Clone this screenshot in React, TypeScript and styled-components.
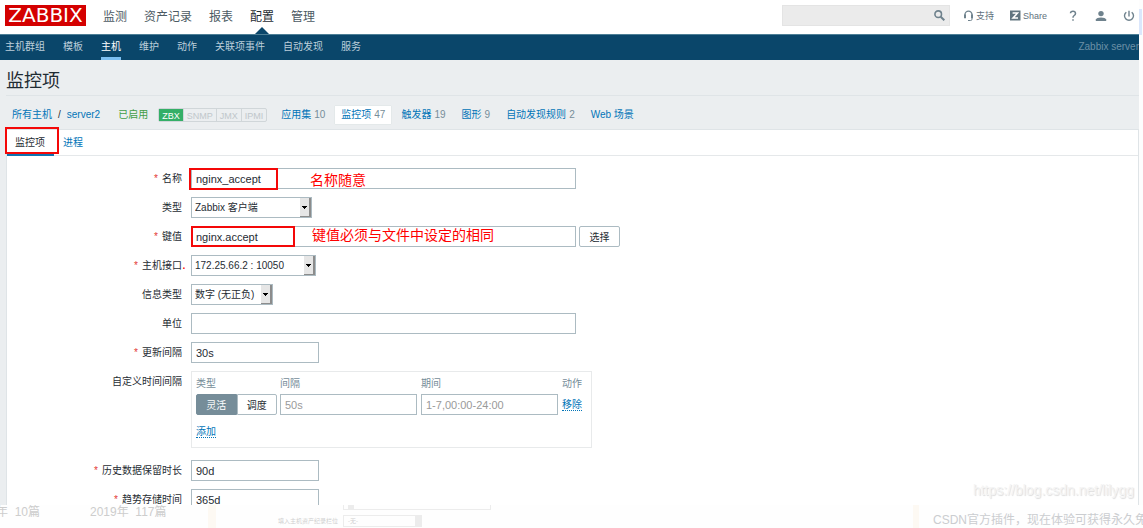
import React from 'react';
import styled, { createGlobalStyle, css } from 'styled-components';

const Global = createGlobalStyle`
  *, *::before, *::after { box-sizing: border-box; }
  body {
    margin: 0;
    background: #fff;
    color: #1f2c33;
    font-family: "Liberation Sans", "Noto Sans CJK SC", sans-serif;
    font-size: 10px;
    line-height: 14px;
    overflow: hidden;
  }
  button, input, select { font-family: inherit; margin: 0; }
  a { color: #0275b8; text-decoration: none; white-space: nowrap; }
`;

const Page = styled.div`
  display: grid;
  grid-template-columns: minmax(0, 1fr) 4px;
  grid-template-rows: minmax(0, 1fr) 23px;
  height: 100vh;
`;

const Screen = styled.div`
  position: relative;
  display: flex;
  flex-direction: column;
  min-height: 0;
  overflow: hidden;
  background: #ebeef0;
`;

const Gutter = styled.div`
  padding-top: 9px;
  background: #fdfdfd;
  &::before {
    content: '';
    display: block;
    height: 26px;
    margin-right: 1px;
    background: #dbe7fc;
  }
`;

const Header = styled.header`
  display: flex;
  flex: none;
  align-items: center;
  height: 34px;
  padding: 0 4px 3px 5px;
  background: #fff;
`;

const Logo = styled.a`
  width: 81px;
  height: 21px;
  margin-right: 17px;
  background: #d40000;
  color: #fff;
  font-family: "DejaVu Sans", sans-serif;
  font-size: 20px;
  line-height: 21px;
  text-align: center;
`;

const MainNav = styled.nav`
  display: flex;
  gap: 17px;
  align-self: stretch;
`;

const MainLink = styled.a<{ $active?: boolean }>`
  position: relative;
  padding-top: 8px;
  color: ${p => (p.$active ? '#1f2c33' : '#4c5a63')};
  font-size: 12px;
  line-height: 18px;
  ${p => p.$active && css`
    &::after {
      content: '';
      position: absolute;
      bottom: -3px;
      left: 5px;
      border: 7px solid transparent;
      border-top: 0;
      border-bottom-color: #0a466a;
    }
  `}
`;

const Tools = styled.div`
  display: flex;
  align-items: center;
  margin-left: auto;
`;

const Search = styled.label`
  display: flex;
  align-items: center;
  width: 168px;
  height: 21px;
  margin-right: 13px;
  padding-right: 4px;
  border: 1px solid #e4e4e4;
  background: #ebebeb;
  input {
    flex: 1;
    min-width: 0;
    border: 0;
    background: transparent;
    outline: 0;
  }
`;

const Tool = styled.a<{ $after?: number }>`
  display: flex;
  align-items: center;
  gap: 2px;
  margin-right: ${p => p.$after ?? 0}px;
  color: #5f717c;
  font-size: 9px;
`;

const SubNav = styled.nav`
  display: flex;
  flex: none;
  gap: 18px;
  height: 26px;
  padding-left: 5px;
  border-top: 1px solid #4d7f96;
  background: #0a466a;
`;

const SubLink = styled.a<{ $active?: boolean }>`
  padding-top: 5px;
  border-bottom: 3px solid ${p => (p.$active ? '#7cc0f2' : 'transparent')};
  color: ${p => (p.$active ? '#fff' : '#bccfdb')};
`;

const ServerName = styled.span`
  margin-left: auto;
  padding-top: 5px;
  color: #6c90a6;
`;

const Title = styled.h1`
  flex: none;
  margin: 0 0 0 6px;
  height: 36px;
  border-bottom: 1px solid #dfe4e7;
  font-size: 18px;
  font-weight: 400;
  line-height: 42px;
`;

const Crumbs = styled.nav`
  display: flex;
  flex: none;
  align-items: center;
  height: 33px;
  margin-left: 12px;
  padding-top: 4px;
`;

const Path = styled.div`
  display: flex;
  gap: 6px;
  margin-right: 18px;
`;

const Enabled = styled.span`
  margin-right: 10px;
  color: #429e47;
  white-space: nowrap;
`;

const Tags = styled.div`
  display: flex;
  height: 14px;
  margin-right: 8px;
  border: 1px solid #d0d6d9;
  border-radius: 2px;
`;

const Tag = styled.span<{ $on?: boolean }>`
  padding: 1px 3px 0;
  background: ${p => (p.$on ? '#34af67' : 'transparent')};
  color: ${p => (p.$on ? '#fff' : '#c0c7cb')};
  font-size: 9px;
  line-height: 12px;
  & + & { border-left: 1px solid #d0d6d9; }
`;

const CrumbLink = styled.a<{ $active?: boolean }>`
  display: flex;
  gap: 3px;
  margin-right: 4px;
  padding: 2px 6px;
  background: ${p => (p.$active ? '#fff' : 'transparent')};
  box-shadow: ${p => (p.$active ? '0 0 1px #c5ccd0' : 'none')};
  span { color: #768d99; }
`;

const Panel = styled.main`
  flex: 1;
  min-height: 0;
  margin-left: 6px;
  border: solid #dfe4e7;
  border-width: 1px 1px 0;
  background: #fff;
`;

const Tabs = styled.div`
  display: flex;
  gap: 1px;
  height: 26px;
  border-bottom: 1px solid #e5e8ea;
`;

const TabItem = styled.div`
  position: relative;
`;

const Tab = styled.a<{ $active?: boolean }>`
  display: block;
  height: 26px;
  padding: 6px 8px 0;
  border-bottom: 3px solid ${p => (p.$active ? '#0f73b0' : 'transparent')};
  color: ${p => (p.$active ? '#1f2c33' : '#0275b8')};
  ${p => p.$active && css`padding-right: 9px;`}
`;

const Mark = styled.span<{ $x: number; $y: number; $w: number; $h: number }>`
  position: absolute;
  left: ${p => p.$x}px;
  top: ${p => p.$y}px;
  width: ${p => p.$w}px;
  height: ${p => p.$h}px;
  border: 2px solid #f40808;
  pointer-events: none;
`;

const Note = styled.span<{ $x: number; $y: number }>`
  position: absolute;
  left: ${p => p.$x}px;
  top: ${p => p.$y}px;
  color: #f00;
  font-size: 14px;
  line-height: 20px;
  white-space: nowrap;
`;

const Form = styled.form`
  display: flex;
  flex-direction: column;
  gap: 8px;
  padding-top: 12px;
`;

const Row = styled.div<{ $last?: boolean }>`
  display: grid;
  grid-template-columns: 175px minmax(0, 1fr);
  column-gap: 9px;
  margin-bottom: ${p => (p.$last ? 4 : 0)}px;
`;

const Label = styled.label<{ $required?: boolean }>`
  padding-top: 4px;
  text-align: right;
  white-space: nowrap;
  ${p => p.$required && css`
    &::before { content: '*'; margin-right: 4px; color: #e33734; }
  `}
`;

const Field = styled.div`
  position: relative;
  display: flex;
  gap: 3px;
`;

const Input = styled.input<{ $w: number }>`
  width: ${p => p.$w}px;
  height: 21px;
  padding: 0 4px;
  border: 1px solid #acbbc2;
  border-radius: 0;
  background: #fff;
  color: #1f2c33;
  font-size: 11px;
  &::placeholder { color: #9a9a9a; opacity: 1; }
`;

const SelectBox = styled.div<{ $w: number }>`
  position: relative;
  width: ${p => p.$w}px;
  height: 21px;
  select {
    width: 100%;
    height: 21px;
    padding: 0 14px 0 3px;
    border: 1px solid #acbbc2;
    border-radius: 0;
    background: #fff;
    color: #1f2c33;
    font-size: 10px;
    appearance: none;
  }
  svg {
    position: absolute;
    top: 1px;
    right: 1px;
    pointer-events: none;
  }
`;

const Button = styled.button`
  width: 41px;
  height: 21px;
  padding: 0;
  border: 1px solid #acbbc2;
  border-radius: 2px;
  background: #fff;
  color: #1f2c33;
  font-size: 10px;
`;

const Toggle = styled.div`
  display: flex;
  width: 81px;
`;

const ToggleButton = styled(Button)<{ $on?: boolean }>`
  flex: 1;
  border-radius: ${p => (p.$on ? '2px 0 0 2px' : '0 2px 2px 0')};
  border-color: ${p => (p.$on ? '#768d99' : '#acbbc2')};
  background: ${p => (p.$on ? '#768d99' : '#fff')};
  color: ${p => (p.$on ? '#fff' : '#1f2c33')};
`;

const Intervals = styled.div`
  width: 401px;
  height: 77px;
  padding: 5px 4px;
  border: 1px solid #e8eaeb;
`;

const IntervalTable = styled.table`
  border-collapse: collapse;
  table-layout: fixed;
  width: 387px;
  th, td { padding: 0; text-align: left; vertical-align: middle; }
  th { height: 17px; color: #768d99; font-weight: 400; vertical-align: top; }
  td { height: 21px; }
  input { display: block; }
`;

const ActionLink = styled.a`
  border-bottom: 1px dotted #0275b8;
  line-height: 12px;
`;

const AddRow = styled.div`
  padding-top: 10px;
`;

const Watermark = styled.div`
  position: absolute;
  right: 5px;
  bottom: 5px;
  color: #f4f4f4;
  font-size: 14px;
  line-height: 20px;
  text-shadow: 1px 1px 1px #dcdcdc;
`;

const Footer = styled.footer`
  grid-column: 1 / -1;
  display: grid;
  grid-template-columns: 90px 118px 8px 122px minmax(0, 1fr) 6px 224px;
  overflow: hidden;
  background: #fefefe;
  color: #cdcdcd;
  font-size: 12px;
  line-height: 14px;
  white-space: pre;
`;

const Archive = styled.span<{ $shift?: boolean }>`
  margin-left: ${p => (p.$shift ? -4 : 0)}px;
`;

const Strip = styled.span`
  background: #fdf9f3;
`;

const FaintLabel = styled.span`
  padding-top: 9px;
  color: #d0d0d0;
  font-size: 6px;
  text-align: right;
`;

const FaintFields = styled.div`
  display: flex;
  flex-direction: column;
  gap: 5px;
  padding-left: 5px;
`;

const FaintBox = styled.span<{ $w: number; $h: number }>`
  display: flex;
  justify-content: space-between;
  width: ${p => p.$w}px;
  height: ${p => p.$h}px;
  padding-left: 4px;
  border: 1px solid #ececec;
  border-top-width: ${p => (p.$h > 5 ? 1 : 0)}px;
  color: #cfcfcf;
  font-size: 6px;
  line-height: 10px;
  &::after {
    content: '';
    width: 6px;
    background: #ececec;
  }
`;

const Promo = styled.span`
  padding: 8px 0 0 14px;
  color: #cbcdd0;
`;

function Select({ id, width, value }: { id: string; width: number; value: string }) {
  return (
    <SelectBox $w={width}>
      <select id={id} defaultValue={value}><option>{value}</option></select>
      <svg width="11" height="19" viewBox="0 0 11 19" shapeRendering="crispEdges" aria-hidden="true">
        <path fill="#e6e6e6" d="M0 0h11v19H0z" />
        <path fill="#8c8c8c" d="M9 0h2v19H0v-1h9z" />
        <path fill="#000" d="M2 8h5v1H6v1H5v1H4v-1H3V9H2z" />
      </svg>
    </SelectBox>
  );
}

const mainItems = ['监测', '资产记录', '报表', '配置', '管理'];
const subItems = ['主机群组', '模板', '主机', '维护', '动作', '关联项事件', '自动发现', '服务'];
const crumbItems: [string, string][] = [
  ['应用集', '10'], ['监控项', '47'], ['触发器', '19'], ['图形', '9'], ['自动发现规则', '2'], ['Web 场景', ''],
];

export default function App() {
  return (
    <>
      <Global />
      <Page>
        <Screen>
          <Header>
            <Logo href="#">ZABBIX</Logo>
            <MainNav>
              {mainItems.map(t => <MainLink key={t} href="#" $active={t === '配置'}>{t}</MainLink>)}
            </MainNav>
            <Tools>
              <Search>
                <input type="text" aria-label="搜索" />
                <svg width="11" height="11" viewBox="0 0 11 11" fill="none" stroke="#6f828d" strokeWidth="1.6">
                  <circle cx="4.2" cy="4.2" r="3.3" />
                  <path d="M6.7 6.7l3.6 3.6" strokeWidth="2" />
                </svg>
              </Search>
              <Tool href="#" $after={16}>
                <svg width="11" height="12" viewBox="0 0 11 12" fill="none" stroke="#6f828d">
                  <path d="M2 6.5V4.6a3.5 3.5 0 0 1 7 0v2" strokeWidth="1.3" />
                  <path d="M2 4.5v3.8M9 4.5v3.8" strokeWidth="2" />
                  <path d="M9 8v1.2q0 1.3-1.4 1.3H5" />
                </svg>
                支持
              </Tool>
              <Tool href="#" $after={22}>
                <svg width="11" height="11" viewBox="0 0 11 11">
                  <path fill="#60747f" d="M0 .5h10.5v10H0z" />
                  <path fill="none" stroke="#fff" strokeWidth="1.5" d="M2.6 3h5L3 8h5" />
                </svg>
                Share
              </Tool>
              <Tool href="#" aria-label="帮助" $after={18}>
                <svg width="8" height="12" viewBox="0 0 8 12" fill="none" stroke="#6f828d" strokeWidth="1.5">
                  <path d="M1.5 3.2Q1.6 1.2 4 1.2T6.5 3.4Q6.5 4.6 5.2 5.5T4 7.8M4 9.2v1.6" />
                </svg>
              </Tool>
              <Tool href="#" aria-label="用户" $after={16}>
                <svg width="12" height="12" viewBox="0 0 12 12" fill="#6f828d">
                  <circle cx="6" cy="3.6" r="2.7" />
                  <path d="M.8 11V9.4Q1.6 7.4 6 7.4t5.2 2V11z" />
                </svg>
              </Tool>
              <Tool href="#" aria-label="退出">
                <svg width="12" height="12" viewBox="0 0 12 12" fill="none" stroke="#6f828d" strokeWidth="1.4">
                  <path d="M6 .8v5.6M3.3 2.2a4.5 4.5 0 1 0 5.4 0" />
                </svg>
              </Tool>
            </Tools>
          </Header>
          <SubNav>
            {subItems.map(t => <SubLink key={t} href="#" $active={t === '主机'}>{t}</SubLink>)}
            <ServerName>Zabbix server</ServerName>
          </SubNav>
          <Title>监控项</Title>
          <Crumbs>
            <Path><a href="#">所有主机</a><span>/</span><a href="#">server2</a></Path>
            <Enabled>已启用</Enabled>
            <Tags><Tag $on>ZBX</Tag><Tag>SNMP</Tag><Tag>JMX</Tag><Tag>IPMI</Tag></Tags>
            {crumbItems.map(([t, n]) => (
              <CrumbLink key={t} href="#" $active={t === '监控项'}>{t}{n && <span>{n}</span>}</CrumbLink>
            ))}
          </Crumbs>
          <Panel>
            <Tabs>
              <TabItem>
                <Tab href="#" $active>监控项</Tab>
                <Mark $x={-2} $y={-3} $w={54} $h={27} />
              </TabItem>
              <TabItem><Tab href="#">进程</Tab></TabItem>
            </Tabs>
            <Form onSubmit={e => e.preventDefault()}>
              <Row>
                <Label htmlFor="name" $required>名称</Label>
                <Field>
                  <Input id="name" $w={385} defaultValue="nginx_accept" />
                  <Mark $x={-2} $y={0} $w={89} $h={22} />
                  <Note $x={119} $y={2}>名称随意</Note>
                </Field>
              </Row>
              <Row>
                <Label htmlFor="type">类型</Label>
                <Field><Select id="type" width={121} value="Zabbix 客户端" /></Field>
              </Row>
              <Row>
                <Label htmlFor="key" $required>键值</Label>
                <Field>
                  <Input id="key" $w={385} defaultValue="nginx.accept" />
                  <Button type="button">选择</Button>
                  <Mark $x={0} $y={0} $w={104} $h={21} />
                  <Note $x={121} $y={-1}>键值必须与文件中设定的相同</Note>
                </Field>
              </Row>
              <Row>
                <Label htmlFor="iface" $required>主机接口</Label>
                <Field>
                  <Select id="iface" width={125} value="172.25.66.2 : 10050" />
                  <Note $x={-9} $y={-1}>.</Note>
                </Field>
              </Row>
              <Row>
                <Label htmlFor="vtype">信息类型</Label>
                <Field><Select id="vtype" width={82} value="数字 (无正负)" /></Field>
              </Row>
              <Row>
                <Label htmlFor="units">单位</Label>
                <Field><Input id="units" $w={385} /></Field>
              </Row>
              <Row>
                <Label htmlFor="delay" $required>更新间隔</Label>
                <Field><Input id="delay" $w={128} defaultValue="30s" /></Field>
              </Row>
              <Row $last>
                <Label as="span">自定义时间间隔</Label>
                <Intervals>
                  <IntervalTable>
                    <colgroup>
                      <col style={{ width: 84 }} /><col style={{ width: 141 }} />
                      <col style={{ width: 141 }} /><col />
                    </colgroup>
                    <thead><tr><th>类型</th><th>间隔</th><th>期间</th><th>动作</th></tr></thead>
                    <tbody>
                      <tr>
                        <td>
                          <Toggle>
                            <ToggleButton type="button" $on>灵活</ToggleButton>
                            <ToggleButton type="button">调度</ToggleButton>
                          </Toggle>
                        </td>
                        <td><Input aria-label="间隔" $w={137} placeholder="50s" /></td>
                        <td><Input aria-label="期间" $w={137} placeholder="1-7,00:00-24:00" /></td>
                        <td><ActionLink href="#">移除</ActionLink></td>
                      </tr>
                    </tbody>
                  </IntervalTable>
                  <AddRow><ActionLink href="#">添加</ActionLink></AddRow>
                </Intervals>
              </Row>
              <Row>
                <Label htmlFor="history" $required>历史数据保留时长</Label>
                <Field><Input id="history" $w={128} defaultValue="90d" /></Field>
              </Row>
              <Row>
                <Label htmlFor="trends" $required>趋势存储时间</Label>
                <Field><Input id="trends" $w={128} defaultValue="365d" /></Field>
              </Row>
            </Form>
          </Panel>
          <Watermark>https://blog.csdn.net/lilygg</Watermark>
        </Screen>
        <Gutter />
        <Footer>
          <Archive $shift>年  10篇</Archive>
          <Archive>2019年  117篇</Archive>
          <Strip />
          <FaintLabel>填入主机资产纪录栏位</FaintLabel>
          <FaintFields>
            <FaintBox $w={148} $h={5} />
            <FaintBox $w={79} $h={12}>-无-</FaintBox>
          </FaintFields>
          <Strip />
          <Promo>CSDN官方插件，现在体验可获得永久免</Promo>
        </Footer>
      </Page>
    </>
  );
}
